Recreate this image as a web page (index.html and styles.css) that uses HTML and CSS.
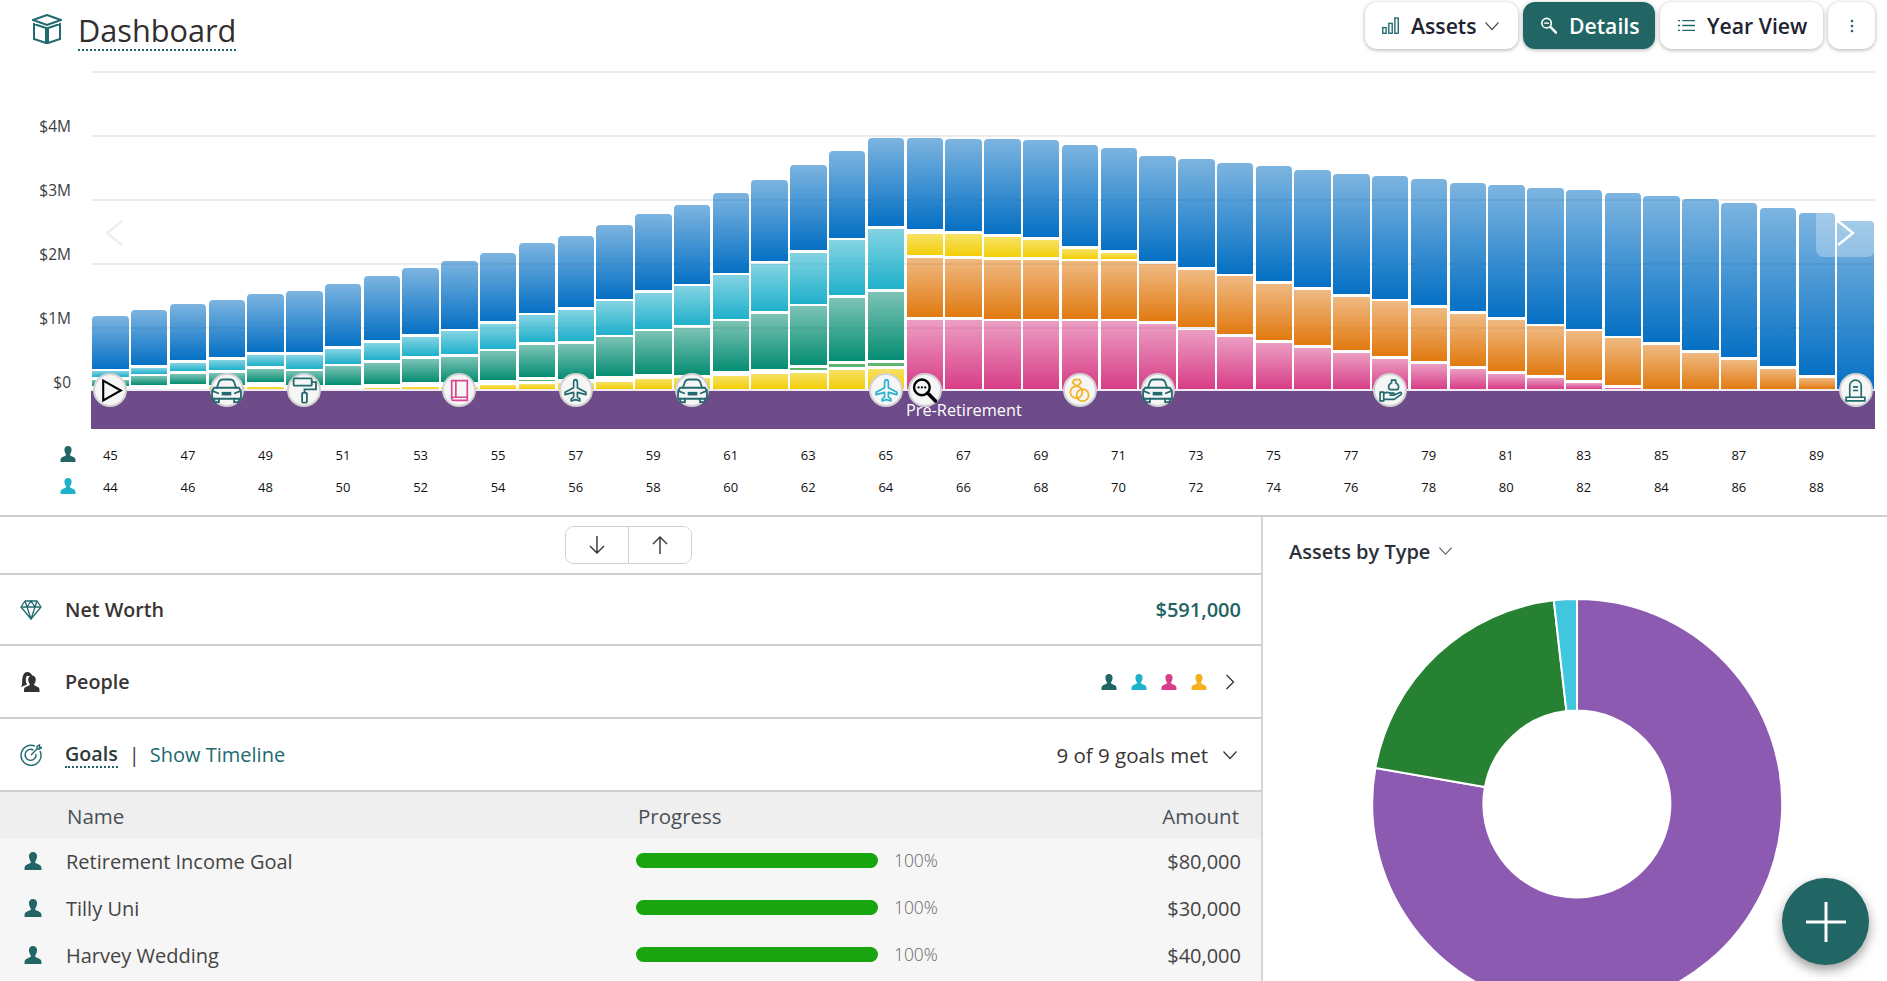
FILE: index.html
```html
<!DOCTYPE html>
<html lang="en">
<head>
<meta charset="utf-8">
<title>Dashboard</title>
<link rel="stylesheet" href="styles.css">
</head>
<body>
<svg class="defs" width="0" height="0" aria-hidden="true">
  <symbol id="i-person" viewBox="0 0 16 16"><path d="M8 0c2.200 0 3.600 1.700 3.600 3.800S10.400 8 9.800 8.800c0 .9 1.400 1.300 3 2 1.700.7 2.700 1.600 2.700 3.200V16H.5v-2c0-1.600 1-2.500 2.700-3.200 1.600-.7 3-1.100 3-2C5.600 8 4.400 5.900 4.400 3.800S5.800 0 8 0z"/></symbol>
  <symbol id="i-car" viewBox="0 0 24 24"><g fill="none" stroke="currentColor" stroke-width="1.300" stroke-linejoin="round" stroke-linecap="round"><path d="M5 10l1.600-4.500C7 4.500 7.800 4 9 4h6c1.200 0 2 .5 2.400 1.500L19 10"/><path d="M3 10h18c1 1 1.500 2 1.500 3.500V18H1.500v-4.500C1.500 12 2 11 3 10z"/><path d="M3 18v2.500h3.500V18M17.500 18v2.500H21V18"/><path d="M2 12.500l4 1.500M22 12.500l-4 1.500"/></g><rect x="8.500" y="13" width="7" height="2.600" fill="currentColor"/></symbol>
  <symbol id="i-roller" viewBox="0 0 24 24"><g fill="none" stroke="currentColor" stroke-width="1.500"><rect x="3" y="2" width="15" height="6" rx=".8"/><path d="M18 5h3.500v6H12v3"/><rect x="10" y="14" width="4" height="8" rx=".6"/></g></symbol>
  <symbol id="i-book" viewBox="0 0 24 24"><g fill="none" stroke="currentColor" stroke-width="1.600"><path d="M4.500 2.500h15v16H6.500a2 2 0 0 0-2 2z"/><path d="M8.500 2.500v16M4.500 20.500c0 .7.600 1 1.500 1h13.500v-3"/></g></symbol>
  <symbol id="i-plane" viewBox="0 0 24 24"><path fill="none" stroke="currentColor" stroke-width="1.600" stroke-linejoin="round" d="M12 1.500c1.100 0 1.800 1.400 1.800 3.200v4.600l8.200 4.400v2.300l-8.200-2.200v4.500l2.400 1.800v1.900L12 20.800l-4.200 1.200v-1.900l2.400-1.800v-4.500L2 16v-2.300l8.200-4.400V4.700c0-1.800.7-3.200 1.800-3.200z"/></symbol>
  <symbol id="i-search" viewBox="0 0 24 24"><g fill="none" stroke="currentColor"><circle cx="9.500" cy="9" r="7.500" stroke-width="2.300"/><path d="M15 14.500l7.500 7.500" stroke-width="3.400" stroke-linecap="round"/></g><circle cx="6.300" cy="9" r="1.100"/><circle cx="9.500" cy="9" r="1.100"/><circle cx="12.700" cy="9" r="1.100"/></symbol>
  <symbol id="i-rings" viewBox="0 0 24 24"><g fill="none" stroke="currentColor" stroke-width="1.700"><path d="M7 1.500h5l1.600 2.800L9.500 8 5.400 4.300z"/><circle cx="9" cy="13.500" r="5.800"/><circle cx="15" cy="16.500" r="5.800"/></g></symbol>
  <symbol id="i-hand" viewBox="0 0 24 24"><g fill="none" stroke="currentColor" stroke-width="1.600" stroke-linejoin="round"><path d="M13 2h4v2.500c1.800 1 2.800 2.300 2.800 4 0 1.500-.8 2.700-1.800 2.700h-6c-1 0-1.800-1.200-1.800-2.700 0-1.700 1-3 2.800-4z"/><path d="M2 13.500h3.500V22H2z"/><path d="M5.500 15c2-1.500 4-1.500 6-.5h3.500c1 0 1 2 0 2h-4M15 16.500l6-2.500c1.500-.5 2 1 1 2l-6.500 4.500H5.500"/></g></symbol>
  <symbol id="i-grave" viewBox="0 0 24 24"><g fill="none" stroke="currentColor" stroke-width="1.600"><path d="M6.500 18.500V7.500a5.500 5.500 0 0 1 11 0v11"/><path d="M3 18.500h18v3.500H3z"/><path d="M9.500 8.500h5M9.500 12h5"/></g></symbol>
  <symbol id="i-chev" viewBox="0 0 16 10"><path d="M1.500 1.500L8 8.500l6.500-7" fill="none" stroke="currentColor" stroke-width="1.200"/></symbol>
</svg>

<header class="top">
  <div class="brand">
    <svg class="brand-icon" viewBox="0 0 30 30"><g fill="none" stroke="currentColor" stroke-width="2"><path d="M15 1L29 6 15 11 1 6z"/><path d="M2 9v16l12 4V14L2 10M28 9v16l-12 4V14l12-4"/></g></svg>
    <h1 class="title">Dashboard</h1>
  </div>
  <nav class="actions">
    <button class="btn btn-assets">
      <svg class="btn-icon" viewBox="0 0 16 16"><g fill="none" stroke="currentColor" stroke-width="1.300"><rect x=".7" y="10" width="3.200" height="5.300"/><rect x="6.400" y="6" width="3.200" height="9.300"/><rect x="12.100" y="1" width="3.200" height="14.300"/></g></svg>
      <span>Assets</span>
      <svg class="chev chev-btn"><use href="#i-chev"/></svg>
    </button>
    <button class="btn btn-details">
      <svg class="btn-icon" viewBox="0 0 18 18"><g fill="none" stroke="currentColor"><circle cx="7" cy="6.500" r="5" stroke-width="1.800"/><path d="M11 10.500l6 6" stroke-width="2.600" stroke-linecap="round"/><path d="M4.500 6.500h5" stroke-width="1.500"/></g></svg>
      <span>Details</span>
    </button>
    <button class="btn btn-year">
      <svg class="btn-icon" viewBox="0 0 16 12"><g fill="none" stroke="currentColor" stroke-width="1.200"><path d="M4 1.500h12M4 6h12M4 10.500h12"/><path d="M0 1.500h2M0 6h2M0 10.500h2"/></g></svg>
      <span>Year View</span>
    </button>
    <button class="btn btn-more" aria-label="More">
      <svg class="dots" viewBox="0 0 4 14"><circle cx="2" cy="2" r="1.300"/><circle cx="2" cy="7" r="1.300"/><circle cx="2" cy="12" r="1.300"/></svg>
    </button>
  </nav>
</header>

<section class="chart">
  <div class="chart-main">
    <div class="y-axis">
      <span class="y-label">$4M</span>
      <span class="y-label">$3M</span>
      <span class="y-label">$2M</span>
      <span class="y-label">$1M</span>
      <span class="y-label">$0</span>
    </div>
    <div class="plot">
      <div class="grid-lines"><i></i><i></i><i></i><i></i></div>
      <div class="bars" id="bars"></div>
      <div class="band"><span class="band-label">Pre-Retirement</span></div>
      <div class="events">
        <span class="event" style="grid-column:1"><svg class="ev ev-black" viewBox="0 0 24 24"><path d="M5 2.500L22 12 5 21.500z" fill="none" stroke="currentColor" stroke-width="2"/></svg></span>
        <span class="event" style="grid-column:4"><svg class="ev ev-lg ev-teal"><use href="#i-car"/></svg></span>
        <span class="event" style="grid-column:6"><svg class="ev ev-md ev-teal"><use href="#i-roller"/></svg></span>
        <span class="event" style="grid-column:10"><svg class="ev ev-pink"><use href="#i-book"/></svg></span>
        <span class="event" style="grid-column:13"><svg class="ev ev-teal"><use href="#i-plane"/></svg></span>
        <span class="event" style="grid-column:16"><svg class="ev ev-lg ev-teal"><use href="#i-car"/></svg></span>
        <span class="event" style="grid-column:21"><svg class="ev ev-cyan"><use href="#i-plane"/></svg></span>
        <span class="event" style="grid-column:22"><svg class="ev ev-black"><use href="#i-search"/></svg></span>
        <span class="event" style="grid-column:26"><svg class="ev ev-gold"><use href="#i-rings"/></svg></span>
        <span class="event" style="grid-column:28"><svg class="ev ev-lg ev-teal"><use href="#i-car"/></svg></span>
        <span class="event" style="grid-column:34"><svg class="ev ev-teal"><use href="#i-hand"/></svg></span>
        <span class="event" style="grid-column:46"><svg class="ev ev-teal"><use href="#i-grave"/></svg></span>
      </div>
    </div>
    <svg class="nav-prev" viewBox="0 0 18 26"><path d="M17 1L2 13l15 12" fill="none" stroke="currentColor" stroke-width="2.400"/></svg>
    <div class="nav-next"><svg class="nav-next-icon" viewBox="0 0 18 26"><path d="M1 1l15 12L1 25" fill="none" stroke="currentColor" stroke-width="2.400"/></svg></div>
  </div>
  <div class="age-row">
    <svg class="age-icon p-teal"><use href="#i-person"/></svg>
    <div class="ages"><span>45</span><span>47</span><span>49</span><span>51</span><span>53</span><span>55</span><span>57</span><span>59</span><span>61</span><span>63</span><span>65</span><span>67</span><span>69</span><span>71</span><span>73</span><span>75</span><span>77</span><span>79</span><span>81</span><span>83</span><span>85</span><span>87</span><span>89</span></div>
  </div>
  <div class="age-row">
    <svg class="age-icon p-cyan"><use href="#i-person"/></svg>
    <div class="ages"><span>44</span><span>46</span><span>48</span><span>50</span><span>52</span><span>54</span><span>56</span><span>58</span><span>60</span><span>62</span><span>64</span><span>66</span><span>68</span><span>70</span><span>72</span><span>74</span><span>76</span><span>78</span><span>80</span><span>82</span><span>84</span><span>86</span><span>88</span></div>
  </div>
</section>

<main class="lower">
  <div class="panel-left">
    <div class="toolbar">
      <div class="seg-btns">
        <button class="seg-btn" aria-label="Down"><svg class="arrow" viewBox="0 0 18 20"><path d="M9 1v17M2 11l7 7 7-7" fill="none" stroke="currentColor" stroke-width="1.400"/></svg></button>
        <button class="seg-btn" aria-label="Up"><svg class="arrow" viewBox="0 0 18 20"><path d="M9 19V2M2 9l7-7 7 7" fill="none" stroke="currentColor" stroke-width="1.400"/></svg></button>
      </div>
    </div>
    <div class="row row-net">
      <svg class="row-icon icon-teal" viewBox="0 0 22 20"><g fill="none" stroke="currentColor" stroke-width="1.300" stroke-linejoin="round"><path d="M5 1h12l4 6-10 12L1 7z"/><path d="M1 7h20M7 7l4 12 4-12M5 1l2 6 4-6 4 6 2-6"/></g></svg>
      <span class="row-title">Net Worth</span>
      <span class="row-value">$591,000</span>
    </div>
    <div class="row row-people">
      <svg class="row-icon icon-dark" viewBox="0 0 20 20"><path d="M7 0c3 0 5 2 5 4H6.500c-1 3-1 6 .5 8.500L1 15c1.200-2 1.200-4 1.200-6C2.200 4 4 0 7 0z"/><path d="M12 3.500c2.400 0 3.800 1.800 3.800 4s-1.200 4.200-1.800 5c0 .9 1.400 1.300 2.400 1.800 1.900.8 3.100 1.700 3.100 3.300V20H4v-2.400c0-1.600 1.200-2.500 3.100-3.300 1-.5 2.900-.9 2.900-1.800-.6-.8-1.800-2.900-1.800-5s1.400-4 3.800-4z"/></svg>
      <span class="row-title">People</span>
      <span class="row-people-end">
        <svg class="p-mini p-teal"><use href="#i-person"/></svg>
        <svg class="p-mini p-cyan"><use href="#i-person"/></svg>
        <svg class="p-mini p-pink"><use href="#i-person"/></svg>
        <svg class="p-mini p-gold"><use href="#i-person"/></svg>
        <svg class="row-chev" viewBox="0 0 10 16"><path d="M1.500 1l7 7-7 7" fill="none" stroke="currentColor" stroke-width="1.300"/></svg>
      </span>
    </div>
    <div class="row row-goals">
      <svg class="row-icon icon-teal" viewBox="0 0 22 22"><g fill="none" stroke="currentColor" stroke-width="1.400"><path d="M15 2.200A10 10 0 1 0 20 7"/><path d="M13.500 6.200A5.500 5.500 0 1 0 16 10"/><path d="M11 11l6-6M17 5V2.500L19.500 1v2.500H22L19.500 5z"/></g></svg>
      <span class="row-title row-title-dotted">Goals</span>
      <span class="sep">|</span>
      <a class="timeline">Show Timeline</a>
      <span class="goals-met">9 of 9 goals met</span>
      <svg class="chev chev-goals"><use href="#i-chev"/></svg>
    </div>
    <div class="table">
      <div class="thead">
        <span class="th-name">Name</span>
        <span class="th-progress">Progress</span>
        <span class="th-amount">Amount</span>
      </div>
      <div class="tr">
        <svg class="tr-icon p-teal"><use href="#i-person"/></svg>
        <span class="tr-name">Retirement Income Goal</span>
        <span class="progress"><span class="track"><i class="fill" style="width:100%"></i></span><span class="pct">100%</span></span>
        <span class="tr-amount">$80,000</span>
      </div>
      <div class="tr">
        <svg class="tr-icon p-teal"><use href="#i-person"/></svg>
        <span class="tr-name">Tilly Uni</span>
        <span class="progress"><span class="track"><i class="fill" style="width:100%"></i></span><span class="pct">100%</span></span>
        <span class="tr-amount">$30,000</span>
      </div>
      <div class="tr">
        <svg class="tr-icon p-teal"><use href="#i-person"/></svg>
        <span class="tr-name">Harvey Wedding</span>
        <span class="progress"><span class="track"><i class="fill" style="width:100%"></i></span><span class="pct">100%</span></span>
        <span class="tr-amount">$40,000</span>
      </div>
    </div>
  </div>
  <aside class="panel-right">
    <div class="assets-head">
      <span class="assets-title">Assets by Type</span>
      <svg class="chev chev-assets"><use href="#i-chev"/></svg>
    </div>
    <svg class="donut" viewBox="0 0 412 412">
      <path class="slice-purple" d="M206 1A205 205 0 1 1 4.400 169.900L113.900 189.100A93.500 93.500 0 1 0 206 112.500z"/>
      <path class="slice-green" d="M4.400 169.900A205 205 0 0 1 182.800 2.300L195.400 113.100A93.500 93.500 0 0 0 113.900 189.100z"/>
      <path class="slice-teal" d="M182.800 2.300A205 205 0 0 1 206 1V112.500A93.500 93.500 0 0 0 195.400 113.100z"/>
    </svg>
  </aside>
</main>

<button class="fab" aria-label="Add"><svg class="fab-icon" viewBox="0 0 40 40"><path d="M20 0v40M0 20h40" fill="none" stroke="currentColor" stroke-width="3"/></svg></button>
<script src="chart.js"></script>
</body>
</html>
```
FILE: styles.css
```css
* { box-sizing: border-box; }
html, body { margin: 0; padding: 0; }
body {
  width: 1887px;
  height: 981px;
  overflow: hidden;
  position: relative;
  background: #fff;
  color: #3a3a3a;
  font-family: "Open Sans", "Liberation Sans", sans-serif;
}
.defs { display: block; height: 0; }
button { font-family: inherit; border: 0; cursor: pointer; }

/* Header */
.top {
  display: flex;
  justify-content: space-between;
  height: 71px;
  padding: 2px 12px 0 32px;
}
.brand { display: flex; align-items: flex-start; gap: 16px; padding-top: 12px; }
.brand-icon { width: 30px; height: 30px; color: #216a6e; }
.title {
  margin: -2px 0 0;
  font-size: 30.700px;
  line-height: 36px;
  font-weight: 500;
  color: #332e2e;
  padding-bottom: 1px;
  border-bottom: 2px dotted #1f6464;
}
.actions { display: flex; gap: 5px; }
.btn {
  display: flex;
  align-items: center;
  height: 47px;
  border-radius: 12px;
  background: #fff;
  box-shadow: 0 1px 4px rgba(0, 0, 0, .32);
  font-size: 21.200px;
  font-weight: 600;
  color: #1d2430;
  padding: 0 0 0 17px;
}
.btn-icon { width: 17px; height: 17px; color: #216a6e; margin-right: 12px; flex: none; }
.btn-assets { width: 153px; }
.btn-details { width: 132px; background: #216565; color: #fff; }
.btn-details .btn-icon { color: #fff; }
.btn-year { width: 163px; padding-left: 18px; }
.btn-more { width: 47px; justify-content: center; padding: 0; }
.dots { width: 4px; height: 14px; fill: #216a6e; }
.chev { color: #555; }
.chev-btn { width: 16px; height: 10px; margin-left: 7px; }

/* Chart */
.chart { height: 444px; }
.chart-main { display: flex; height: 358px; position: relative; }
.y-axis {
  width: 91px;
  flex: none;
  padding: 45px 20px 0 0;
  display: flex;
  flex-direction: column;
  align-items: flex-end;
}
.y-label {
  flex: none;
  height: 64px;
  line-height: 20px;
  font-size: 15.500px;
  font-weight: 500;
  color: #3c3c3c;
}
.plot {
  width: 1784px;
  display: grid;
  border-top: 2px solid #ececec;
}
.plot > * { grid-area: 1 / 1; }
.grid-lines {
  display: flex;
  flex-direction: column;
  gap: 62px;
  padding-top: 62px;
}
.grid-lines i { display: block; height: 2px; background: #ececec; }
.bars {
  display: grid;
  grid-template-columns: repeat(46, 1fr);
  height: 318px;
}
.bar { display: flex; flex-direction: column; padding: 0 1.2px; }
.s { display: block; flex: none; }
.s:first-child { border-radius: 4px 4px 0 0; }
.s-b { background: linear-gradient(rgba(5, 112, 196, .52), #0570c4); }
.s-t { background: linear-gradient(rgba(31, 176, 203, .55), #1fb0cb); }
.s-g { background: linear-gradient(rgba(5, 141, 114, .52), #058d72); }
.s-l { background: #5fb56f; }
.s-y { background: linear-gradient(rgba(242, 207, 7, .62), #f2cf07); }
.s-o { background: linear-gradient(rgba(225, 122, 16, .52), #e17a10); }
.s-p { background: linear-gradient(rgba(216, 61, 135, .5), #d83d87); }
.band {
  align-self: end;
  height: 38px;
  background: #6e4c89;
  color: #fff;
  font-size: 16.300px;
  line-height: 38px;
  display: flex;
  box-shadow: 0 -2px 0 #f1e9f3;
}
.band-label { margin-left: 815px; }
.events {
  display: grid;
  grid-template-columns: repeat(46, 1fr);
  align-self: start;
  margin-top: 300px;
}
.event {
  justify-self: center;
  width: 34px;
  height: 34px;
  border-radius: 50%;
  background: #f6f6f6;
  border: 2px solid #d2d2d2;
  display: flex;
  align-items: center;
  justify-content: center;
}
.ev { width: 25px; height: 25px; flex: none; }
.ev-md { width: 29px; height: 29px; }
.ev-lg { width: 33px; height: 33px; }
.ev-teal { color: #216a6e; }
.ev-black { color: #000; fill: #000; }
.ev-pink { color: #d8468f; }
.ev-cyan { color: #28b2cf; }
.ev-gold { color: #f5b324; }
.nav-prev {
  position: absolute;
  left: 105px;
  top: 149px;
  width: 18px;
  height: 26px;
  color: #eeeeee;
}
.nav-next {
  position: absolute;
  left: 1816px;
  top: 137px;
  width: 59px;
  height: 49px;
  border-radius: 8px;
  background: rgba(255, 255, 255, .3);
  display: flex;
  align-items: center;
  justify-content: center;
}
.nav-next-icon { width: 18px; height: 26px; color: #fff; }
.age-row { display: flex; height: 32px; align-items: center; }
.chart-main + .age-row { margin-top: 10px; }
.age-icon { width: 16px; height: 16px; margin: -2px 15px 0 60px; flex: none; }
.ages {
  display: grid;
  grid-template-columns: repeat(23, 77.56px);
  font-size: 13px;
  color: #111;
}
.ages span { width: 38.78px; text-align: center; }
.p-teal { fill: #216565; }
.p-cyan { fill: #1fb0cb; }
.p-pink { fill: #d83d87; }
.p-gold { fill: #f5b01c; }

/* Lower */
.lower {
  display: flex;
  height: 466px;
  border-top: 2px solid #cfcfcf;
}
.panel-left { width: 1263px; flex: none; border-right: 2px solid #d6d6d6; }
.toolbar {
  height: 58px;
  display: flex;
  justify-content: flex-end;
  padding: 9px 569px 0 0;
  border-bottom: 2px solid #cfcfcf;
}
.seg-btns {
  display: flex;
  width: 127px;
  height: 38px;
  border: 1px solid #cfcfcf;
  border-radius: 9px;
  overflow: hidden;
}
.seg-btn { flex: 1; background: #fff; display: flex; align-items: center; justify-content: center; padding: 0; color: #333; }
.seg-btn + .seg-btn { border-left: 1px solid #cfcfcf; }
.arrow { width: 18px; height: 20px; }
.row {
  display: flex;
  align-items: center;
  height: 73px;
  padding: 0 20px;
  border-bottom: 2px solid #cfcfcf;
}
.row-net { height: 71px; }
.row-icon { width: 22px; height: 22px; flex: none; margin-right: 23px; }
.icon-teal { color: #216a6e; }
.icon-dark { fill: #333; width: 20px; height: 20px; margin-right: 25px; }
.row-title { font-size: 19.700px; font-weight: 600; color: #3a3434; }
.row-value { margin-left: auto; font-size: 20px; font-weight: 600; color: #1f6464; }
.row-people-end { margin-left: auto; display: flex; align-items: center; gap: 14px; }
.p-mini { width: 16px; height: 16px; }
.row-chev { width: 10px; height: 16px; color: #333; margin-left: 4px; margin-right: 6px; }
.row-title-dotted { border-bottom: 2px dotted #1f6464; line-height: 25px; color: #2d3a3a; }
.sep { margin: 0 10px 0 11px; font-size: 20px; color: #3a3a3a; }
.timeline { font-size: 20px; color: #216a6e; }
.goals-met { margin-left: auto; font-size: 20.500px; font-weight: 500; color: #3a3434; }
.chev-goals { width: 16px; height: 10px; margin-left: 14px; margin-right: 3px; color: #333; }
.table { background: #f6f6f6; }
.thead {
  display: grid;
  grid-template-columns: 638px 1fr auto;
  align-items: center;
  height: 47px;
  padding: 0 22px 0 67px;
  background: #efefef;
  font-size: 20.500px;
  font-weight: 500;
  color: #4a4f55;
}
.thead span:nth-child(2) { margin-left: -67px; }
.tr {
  display: grid;
  grid-template-columns: 42px 570px 1fr auto;
  align-items: center;
  height: 47px;
  padding: 0 20px 3px 24px;
  font-size: 20px;
  color: #444;
}
.tr-icon { width: 18px; height: 18px; }
.progress { display: flex; align-items: center; gap: 16px; margin-bottom: 2px; }
.track { display: block; width: 242px; height: 15px; border-radius: 8px; overflow: hidden; background: #e3e3e3; }
.fill { display: block; height: 100%; background: #19a50f; }
.pct { font-size: 17.400px; color: #666; font-weight: 300; }

.panel-right { flex: 1; min-width: 0; }
.assets-head { display: flex; align-items: center; height: 58px; padding: 10px 0 0 26px; }
.assets-title { font-size: 20px; font-weight: 600; color: #2b3038; }
.chev-assets { width: 15px; height: 10px; margin-left: 8px; color: #555; }
.donut { display: block; width: 412px; height: 412px; margin: 23px 0 0 108px; }
.slice-purple { fill: #8c5bb1; stroke: #fff; stroke-width: 2; }
.slice-green { fill: #268132; stroke: #fff; stroke-width: 2; }
.slice-teal { fill: #40c6de; stroke: #fff; stroke-width: 2; }

.fab {
  position: absolute;
  left: 1782px;
  top: 878px;
  width: 87px;
  height: 87px;
  border-radius: 50%;
  background: #216565;
  box-shadow: 0 5px 12px rgba(0, 0, 0, .4);
  display: flex;
  align-items: center;
  justify-content: center;
  padding: 0;
}
.fab-icon { width: 40px; height: 40px; color: #fff; }
```
FILE: chart.js
```js
// Each column lists kind, top y, bottom y for its stacked segments, in page pixels.
var PLOT_TOP = 73;
var data = [
  ["b",316.3,369,"t",371,377,"g",380,386],
  ["b",310,365,"t",367.7,374,"g",376.3,385],
  ["b",304,360,"t",362.7,371.3,"g",374,384],
  ["b",300.3,357.3,"t",360,370,"g",372.7,385,"y",387,389],
  ["b",294,352,"t",355,366.3,"g",369,382.3,"y",386.7,389],
  ["b",291.3,352,"t",355,369,"g",371.3,385],
  ["b",284,346.3,"t",349,364,"g",366.3,385],
  ["b",276.3,340,"t",342.7,360,"g",362.7,384,"y",387.7,389],
  ["b",267.7,334,"t",336.7,356.3,"g",359,382.3,"y",386.7,389],
  ["b",261.3,329,"t",331.3,354,"g",356.7,382.3,"y",386.7,389],
  ["b",252.7,321.3,"t",323.7,349,"g",351.3,380,"y",385.3,389],
  ["b",242.7,312.7,"t",315,342.3,"g",345,377.3,"l",380,381.3,"y",384,389],
  ["b",236.3,307.3,"t",310,341,"g",343.7,378.7,"y",382.7,389],
  ["b",225,299,"t",301.3,335,"g",337.3,376.3,"y",381.7,389],
  ["b",214,290.3,"t",292.7,329,"g",331.3,373.7,"y",379,389],
  ["b",205,284,"t",286.3,325,"g",327.7,375,"y",377.7,389],
  ["b",192.7,272.7,"t",275,319,"g",321.3,371.3,"y",376.3,389],
  ["b",180,261.3,"t",263.7,311.3,"g",313.7,369,"y",374,389],
  ["b",165,250,"t",252.7,304,"g",306.3,365.3,"l",367.7,370,"y",373,389],
  ["b",151.3,237.7,"t",240,295,"g",297.7,361.3,"l",364,367.3,"y",370.3,389],
  ["b",137.7,226,"t",229,289,"g",291.7,360,"l",362.7,366,"y",369,389],
  ["b",137.7,229,"y",234,255,"o",257.7,317.3,"p",320,389],
  ["b",139,231,"y",234,256,"o",258.7,317.3,"p",320,389],
  ["b",139,234,"y",236.7,257.3,"o",260,319,"p",321.3,389],
  ["b",140,237.3,"y",240,257.3,"o",260,319,"p",321.3,389],
  ["b",145,246,"y",249,259,"o",261.3,319,"p",321.3,389],
  ["b",147.7,250,"y",253,259,"o",261.3,319,"p",321.3,389],
  ["b",156.3,261,"o",263.7,321.3,"p",323.7,389],
  ["b",159,267,"o",270,327.3,"p",330,389],
  ["b",162.7,274,"o",276.3,334,"p",336.7,389],
  ["b",166.3,281.3,"o",284,340.3,"p",342.7,389],
  ["b",170.3,287,"o",290,345.3,"p",347.7,389],
  ["b",174,294.3,"o",296.7,350.3,"p",352.7,389],
  ["b",176.3,299,"o",301.3,356.3,"p",359,389],
  ["b",179,305,"o",307.7,361.3,"p",364,389],
  ["b",182.7,311.3,"o",313.7,366.3,"p",369,389],
  ["b",185.3,317.3,"o",320,371.3,"p",374,389],
  ["b",187.7,324,"o",326.3,375,"p",377.7,389],
  ["b",190.3,329,"o",331.3,380,"p",382.7,389],
  ["b",192.5,335.7,"o",338,385,"p",387.7,389],
  ["b",196,342,"o",345,389],
  ["b",198.6,350,"o",352.7,389],
  ["b",203,356.7,"o",360,389],
  ["b",208,366,"o",368.7,389],
  ["b",213,375,"o",377.7,389],
  ["b",221.4,389]
];
var host = document.getElementById("bars");
data.forEach(function (col) {
  var bar = document.createElement("div");
  bar.className = "bar";
  var prev = PLOT_TOP;
  for (var i = 0; i < col.length; i += 3) {
    var s = document.createElement("span");
    s.className = "s s-" + col[i];
    s.style.marginTop = (col[i + 1] - prev) + "px";
    s.style.height = (col[i + 2] - col[i + 1]) + "px";
    prev = col[i + 2];
    bar.appendChild(s);
  }
  host.appendChild(bar);
});
```
